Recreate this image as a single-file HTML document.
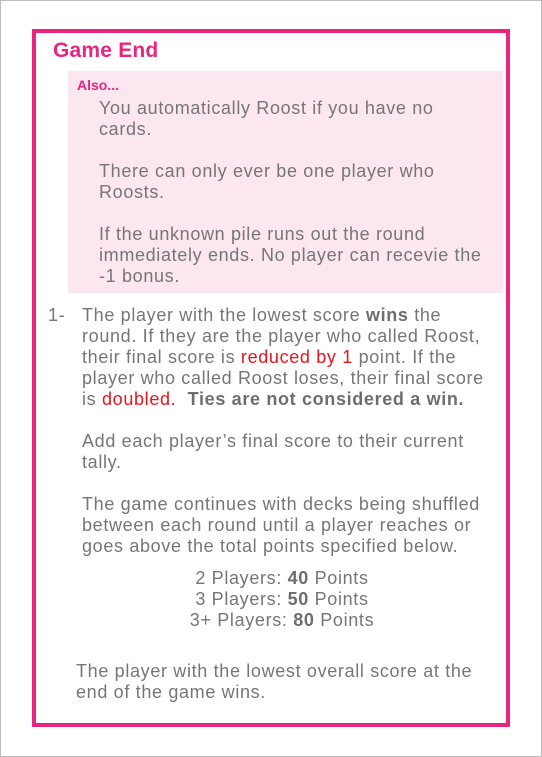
<!DOCTYPE html>
<html><head><meta charset="utf-8"><style>
html,body{margin:0;padding:0;background:#fff;}
body{width:542px;height:757px;position:relative;overflow:hidden;font-family:"Liberation Sans",sans-serif;color:#767676;}
.outer{position:absolute;left:0;top:0;width:540px;height:755px;border:1px solid #bdbdbd;}
.box{position:absolute;left:32px;top:29px;width:470px;height:690px;border:4px solid #e8267f;}
.fill{position:absolute;left:68px;top:71px;width:435px;height:222px;background:#fce6f0;}
.l{position:absolute;white-space:nowrap;font-size:18px;line-height:21px;letter-spacing:0.66px;}
.h{position:absolute;left:53px;top:39px;font-size:21px;font-weight:bold;color:#e8267f;letter-spacing:0.2px;}
.a{position:absolute;left:77px;top:77px;font-size:14px;font-weight:bold;color:#e8267f;}
.r{color:#e8141c;}
b{font-weight:bold;color:#6e6e6e;}
.c{left:0;width:564px;text-align:center;}
</style></head><body>
<div class="outer"></div>
<div class="box"></div>
<div class="fill"></div>
<div class="h">Game End</div>
<div class="a">Also...</div>
<div class="l" style="left:99px;top:98px">You automatically Roost if you have no</div>
<div class="l" style="left:99px;top:119px">cards.</div>
<div class="l" style="left:99px;top:161px">There can only ever be one player who</div>
<div class="l" style="left:99px;top:182px">Roosts.</div>
<div class="l" style="left:99px;top:224px">If the unknown pile runs out the round</div>
<div class="l" style="left:99px;top:245px">immediately ends. No player can recevie the</div>
<div class="l" style="left:99px;top:266px">-1 bonus.</div>
<div class="l" style="left:48px;top:305px">1-</div>
<div class="l" style="left:82px;top:305px">The player with the lowest score <b>wins</b> the</div>
<div class="l" style="left:82px;top:326px">round. If they are the player who called Roost,</div>
<div class="l" style="left:82px;top:347px">their final score is <span class="r">reduced by 1</span> point. If the</div>
<div class="l" style="left:82px;top:368px">player who called Roost loses, their final score</div>
<div class="l" style="left:82px;top:389px">is <span class="r">doubled.</span>&nbsp; <b>Ties are not considered a win.</b></div>
<div class="l" style="left:82px;top:431px">Add each player’s final score to their current</div>
<div class="l" style="left:82px;top:452px">tally.</div>
<div class="l" style="left:82px;top:494px">The game continues with decks being shuffled</div>
<div class="l" style="left:82px;top:515px">between each round until a player reaches or</div>
<div class="l" style="left:82px;top:536px">goes above the total points specified below.</div>
<div class="l c" style="top:568px">2 Players: <b>40</b> Points</div>
<div class="l c" style="top:589px">3 Players: <b>50</b> Points</div>
<div class="l c" style="top:610px">3+ Players: <b>80</b> Points</div>
<div class="l" style="left:76px;top:661px">The player with the lowest overall score at the</div>
<div class="l" style="left:76px;top:682px">end of the game wins.</div>
</body></html>
